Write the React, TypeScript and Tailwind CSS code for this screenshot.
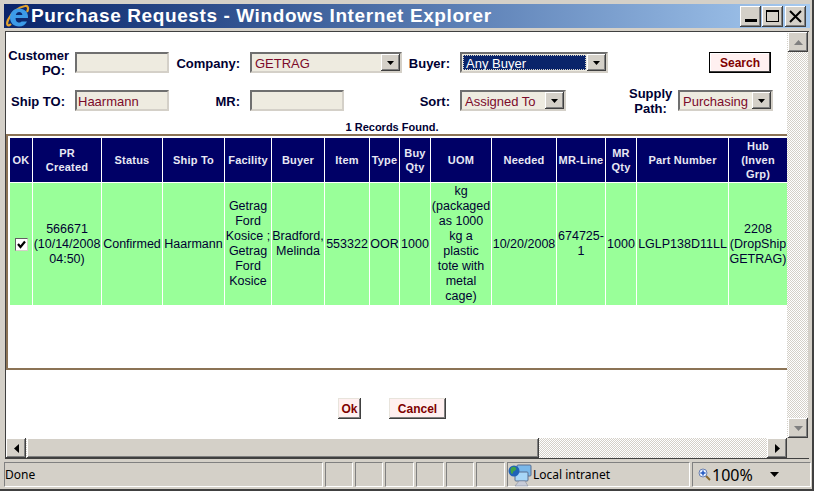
import type { ReactNode } from 'react'

const raised = 'shadow-[inset_-1px_-1px_0_#404040,inset_1px_1px_0_#ffffff,inset_-2px_-2px_0_#808080]'
const dither = 'bg-[repeating-conic-gradient(#d4d0c8_0_25%,#ffffff_0_50%)] bg-[length:2px_2px]'
const sunken = 'border-2 border-t-[#6f6f6f] border-l-[#6f6f6f] border-r-[#d4d0c8] border-b-[#d4d0c8]'

const columns = [
  { width: 22, head: ['OK'] },
  { width: 68, head: ['PR', 'Created'], cell: ['566671', '(10/14/2008', '04:50)'] },
  { width: 60, head: ['Status'], cell: ['Confirmed'] },
  { width: 61, head: ['Ship To'], cell: ['Haarmann'] },
  { width: 46, head: ['Facility'], cell: ['Getrag', 'Ford', 'Kosice ;', 'Getrag', 'Ford', 'Kosice'] },
  { width: 52, head: ['Buyer'], cell: ['Bradford,', 'Melinda'] },
  { width: 44, head: ['Item'], cell: ['553322'] },
  { width: 29, head: ['Type'], cell: ['OOR'] },
  { width: 30, head: ['Buy', 'Qty'], cell: ['1000'] },
  { width: 60, head: ['UOM'], cell: ['kg', '(packaged', 'as 1000', 'kg a', 'plastic', 'tote with', 'metal', 'cage)'] },
  { width: 64, head: ['Needed'], cell: ['10/20/2008'] },
  { width: 48, head: ['MR-Line'], cell: ['674725-', '1'] },
  { width: 30, head: ['MR', 'Qty'], cell: ['1000'] },
  { width: 91, head: ['Part Number'], cell: ['LGLP138D11LL'] },
  { width: 58, head: ['Hub', '(Inven', 'Grp)'], cell: ['2208', '(DropShip', 'GETRAG)'] },
]

function Lines({ lines }: { lines: string[] }) {
  return (
    <>
      {lines.map((line, i) => (
        <div key={i}>{line}</div>
      ))}
    </>
  )
}

function IeLogo() {
  return (
    <svg width="24" height="24" viewBox="0 0 24 24" className="shrink-0">
      <path d="M5 20c-3 3-5 1-3-4C5 9 12 3 19 2c3-.5 4 2 2 6" fill="none" stroke="#e3a32e" strokeWidth="2.200" />
      <path d="M13 4.500c-5.500 0-9 4-9 9s3.500 9 9 9c4 0 6.500-2 8-5h-5.500c-1 1.500-4.500 1.500-5.500-1-.3-.8-.4-1.500-.4-2.500H22c.5-6-3.500-9.500-9-9.500zM9.800 11c.5-2 1.800-3 3.400-3s3 1 3.200 3z" fill="#3c9be8" fillRule="evenodd" />
    </svg>
  )
}

function IntranetIcon() {
  return (
    <svg width="24" height="24" viewBox="0 0 24 24" className="shrink-0">
      <rect x="9" y="2" width="14" height="11" rx="1" fill="#7ab8ea" stroke="#5a6f90" />
      <rect x="7" y="9" width="13" height="9" rx="1" fill="#a8d6f7" stroke="#5a6f90" />
      <path d="M7 23l4-5h6l3 5z" fill="#c8ccd8" stroke="#7a8090" strokeWidth=".5" />
      <circle cx="6" cy="8" r="5.500" fill="#1f63b8" />
      <path d="M3 5c2-2 4-1 5 0s-1 3-2 3-1 3-2 3-2-4-1-6z" fill="#3fa34a" />
    </svg>
  )
}

function ZoomIcon() {
  return (
    <svg width="13" height="13" viewBox="0 0 13 13" className="shrink-0">
      <path d="M7 7l5 5" stroke="#8a6a30" strokeWidth="2" />
      <circle cx="5" cy="5" r="4" fill="#e8f0ff" stroke="#6a80b0" />
      <path d="M5 2.500v5M2.500 5h5" stroke="#1f55c0" strokeWidth="1.500" />
    </svg>
  )
}

function Arrow({ dir, color = '#000000' }: { dir: 'up' | 'down' | 'left' | 'right'; color?: string }) {
  const points = {
    up: '0,5 9,5 4.500,0',
    down: '0,0 9,0 4.500,5',
    left: '5,0 5,9 0,4.500',
    right: '0,0 0,9 5,4.500',
  }[dir]
  const box = dir === 'up' || dir === 'down' ? { w: 9, h: 5 } : { w: 5, h: 9 }
  return (
    <svg width={box.w} height={box.h} viewBox={`0 0 ${box.w} ${box.h}`}>
      <polygon points={points} fill={color} />
    </svg>
  )
}

function ScrollButton({ children }: { children: ReactNode }) {
  return (
    <div className={`w-[20px] h-[20px] shrink-0 bg-[#d4d0c8] flex items-center justify-center ${raised}`}>{children}</div>
  )
}

function TextBox({ value, width }: { value?: string; width: string }) {
  return (
    <div className={`ml-[10px] h-[21px] ${width} bg-[#eeebe0] pl-[1px] text-[13px] leading-[19px] text-[#7b0a2a] ${sunken}`}>
      {value}
    </div>
  )
}

function Select({ value, width, focused }: { value: string; width: string; focused?: boolean }) {
  return (
    <div className={`h-[21px] ${width} flex bg-[#eeebe0] text-[13px] leading-[19px] text-[#7b0a2a] ${sunken}`}>
      <div className={`flex-1 min-w-0 overflow-hidden whitespace-nowrap pl-[3px] ${focused ? 'm-[1px] pl-[2px] leading-[17px] bg-[#0a246a] text-white outline-1 outline-dotted outline-offset-[-1px] outline-[#d4d0c8]' : ''}`}>
        {value}
      </div>
      <div className={`w-[19px] h-[17px] shrink-0 bg-[#d4d0c8] flex items-center justify-center ${raised}`}>
        <svg width="7" height="4" viewBox="0 0 7 4">
          <polygon points="0,0 7,0 3.500,4" fill="#000000" />
        </svg>
      </div>
    </div>
  )
}

function Label({ children, lower = true }: { children: ReactNode; lower?: boolean }) {
  return <div className={`text-right text-[13px] leading-[15px] font-bold text-[#000033] ${lower ? 'mt-[1px]' : ''}`}>{children}</div>
}

function FormButton({ children, width, strong }: { children: ReactNode; width: string; strong?: boolean }) {
  return (
    <button
      className={`h-[21px] ${width} bg-[#fff0f0] text-[12px] font-bold text-[#800000] flex items-center justify-center ${
        strong
          ? 'border border-black shadow-[inset_-1px_-1px_0_#404040,inset_1px_1px_0_#ffffff]'
          : 'shadow-[inset_-1px_-1px_0_#404040,inset_1px_1px_0_#e8e4dc,inset_-2px_-2px_0_#808080]'
      }`}
    >
      {children}
    </button>
  )
}

function StatusPanel({ children, width }: { children?: ReactNode; width: string }) {
  return (
    <div className={`h-[25px] ${width} shrink-0 flex items-center border border-t-[#808080] border-l-[#808080] border-r-white border-b-white`}>
      {children}
    </div>
  )
}

export default function App() {
  return (
    <div className="w-[814px] h-[491px] overflow-hidden flex flex-col bg-[#d4d0c8] pt-[4px] pl-[4px] pr-[2px] font-['Liberation_Sans',Arial,sans-serif] border-r-2 border-b-2 border-r-[#404040] border-b-[#404040]">
      {/* Title bar */}
      <div className="h-[24px] w-[806px] shrink-0 flex items-center bg-gradient-to-r from-[#0a246a] to-[#a6caf0] pr-[4px]">
        <div className="ml-[2px] -mt-[1px]">
          <IeLogo />
        </div>
        <div className="ml-[1px] text-[19px] font-bold tracking-[0.6px] leading-[24px] text-white whitespace-nowrap">
          Purchase Requests - Windows Internet Explorer
        </div>
        <div className="ml-auto flex gap-[1px]">
          <div className={`w-[21px] h-[21px] bg-[#d4d0c8] flex items-end justify-center pb-[5px] ${raised}`}>
            <div className="w-[12px] h-[3px] bg-black" />
          </div>
          <div className={`w-[21px] h-[21px] bg-[#d4d0c8] flex items-center justify-center ${raised}`}>
            <div className="w-[13px] h-[12px] border border-t-2 border-black" />
          </div>
          <div className={`ml-[1px] w-[21px] h-[21px] bg-[#d4d0c8] flex items-center justify-center ${raised}`}>
            <svg width="13" height="13" viewBox="0 0 13 13">
              <path d="M1 1l11 11M12 1L1 12" stroke="#000000" strokeWidth="2" />
            </svg>
          </div>
        </div>
      </div>

      {/* Page frame */}
      <div className="mt-[3px] ml-[1px] w-[804px] h-[428px] shrink-0 border-t border-l border-[#404040] flex flex-col border-b">
        <div className="flex h-[406px] shrink-0">
          <div className="w-[781px] bg-white flex flex-col">
            <div className="mt-[16px] grid grid-cols-[59px_104px_71px_162px_48px_158px_64px_1fr] grid-rows-[29px_29px] gap-y-[9px] items-center">
              <Label lower={false}>
                <span className="-mr-[4px]">Customer</span>
                <br />
                PO:
              </Label>
              <TextBox width="w-[94px]" />
              <Label>Company:</Label>
              <div className="ml-[10px]">
                <Select value="GETRAG" width="w-[152px]" />
              </div>
              <Label>Buyer:</Label>
              <div className="ml-[10px]">
                <Select value="Any Buyer" width="w-[148px]" focused />
              </div>
              <div />
              <div className="ml-[37px]">
                <FormButton width="w-[62px]" strong>
                  Search
                </FormButton>
              </div>

              <Label>Ship TO:</Label>
              <TextBox value="Haarmann" width="w-[94px]" />
              <Label>MR:</Label>
              <TextBox width="w-[94px]" />
              <Label>Sort:</Label>
              <div className="ml-[10px]">
                <Select value="Assigned To" width="w-[106px]" />
              </div>
              <div className="mt-[1px] text-center pl-[21px] text-[13px] leading-[15px] font-bold text-[#000033]">
                Supply
                <br />
                Path:
              </div>
              <div className="ml-[6px]">
                <Select value="Purchasing" width="w-[95px]" />
              </div>
            </div>

            <div className="mt-[6px] h-[13px] pr-[9px] text-center text-[11px] leading-[13px] font-bold text-[#000033]">
              1 Records Found.
            </div>

            {/* Results */}
            <div className="h-[236px] shrink-0 border-t-2 border-l-2 border-b-2 border-[#8b7355] pl-[1px] pt-[1px] overflow-hidden">
              <table className="table-fixed border-separate border-spacing-[1px] w-[770px]">
                <colgroup>
                  {columns.map((col) => (
                    <col key={col.head.join()} style={{ width: col.width }} />
                  ))}
                </colgroup>
                <thead>
                  <tr className="h-[44px]">
                    {columns.map((col) => (
                      <th key={col.head.join()} className="p-0 bg-[#000066] text-[11px] leading-[14px] tracking-[0.2px] font-bold text-center text-[#e8e8f4] whitespace-nowrap">
                        <Lines lines={col.head} />
                      </th>
                    ))}
                  </tr>
                </thead>
                <tbody>
                  <tr className="h-[122px]">
                    {columns.map((col) => (
                      <td key={col.head.join()} className="p-0 bg-[#99ff99] text-[12.5px] leading-[15px] text-center text-[#000033] whitespace-nowrap">
                        {col.cell ? (
                          <Lines lines={col.cell} />
                        ) : (
                          <div className="mx-auto w-[13px] h-[13px] bg-white border border-t-[#606060] border-l-[#606060] border-r-[#d4d0c8] border-b-[#d4d0c8] flex items-center justify-center">
                            <svg width="9" height="9" viewBox="0 0 9 9">
                              <path d="M1 4l2.500 3L8 1.500" fill="none" stroke="#000000" strokeWidth="2.200" />
                            </svg>
                          </div>
                        )}
                      </td>
                    ))}
                  </tr>
                </tbody>
              </table>
            </div>

            <div className="mt-[28px] flex pl-[332px] gap-[28px]">
              <FormButton width="w-[23px]">Ok</FormButton>
              <FormButton width="w-[57px]">Cancel</FormButton>
            </div>
          </div>

          {/* Vertical scrollbar */}
          <div className={`w-[21px] flex flex-col justify-between pl-[1px] ${dither}`}>
            <ScrollButton>
              <Arrow dir="up" color="#808080" />
            </ScrollButton>
            <ScrollButton>
              <Arrow dir="down" color="#808080" />
            </ScrollButton>
          </div>
        </div>

        {/* Horizontal scrollbar */}
        <div className="h-[21px] flex">
          <div className={`w-[781px] flex ${dither}`}>
            <ScrollButton>
              <Arrow dir="left" />
            </ScrollButton>
            <div className={`ml-[1px] w-[512px] h-[20px] bg-[#d4d0c8] ${raised}`} />
            <div className="flex-1" />
            <ScrollButton>
              <Arrow dir="right" />
            </ScrollButton>
          </div>
        </div>
      </div>

      {/* Status bar */}
      <div className="mt-[3px] flex gap-[2px] text-[12px] text-black font-['Noto_Sans',sans-serif]">
        <StatusPanel width="w-[319px]">
          <span className="mt-[1px]">Done</span>
        </StatusPanel>
        <StatusPanel width="w-[28px]" />
        <StatusPanel width="w-[28px]" />
        <StatusPanel width="w-[29px]" />
        <StatusPanel width="w-[28px]" />
        <StatusPanel width="w-[28px]" />
        <StatusPanel width="w-[29px]" />
        <StatusPanel width="w-[183px]">
          <IntranetIcon />
          <span className="ml-[1px] mt-[1px]">Local intranet</span>
        </StatusPanel>
        <StatusPanel width="w-[119px]">
          <span className="ml-[5px]">
            <ZoomIcon />
          </span>
          <span className="text-[16px] ml-[1px]">100%</span>
          <span className="ml-[17px] -mt-[1px]">
            <svg width="9" height="5" viewBox="0 0 9 5" className="block">
              <polygon points="0,0 9,0 4.500,5" fill="#000000" />
            </svg>
          </span>
        </StatusPanel>
      </div>
    </div>
  )
}
